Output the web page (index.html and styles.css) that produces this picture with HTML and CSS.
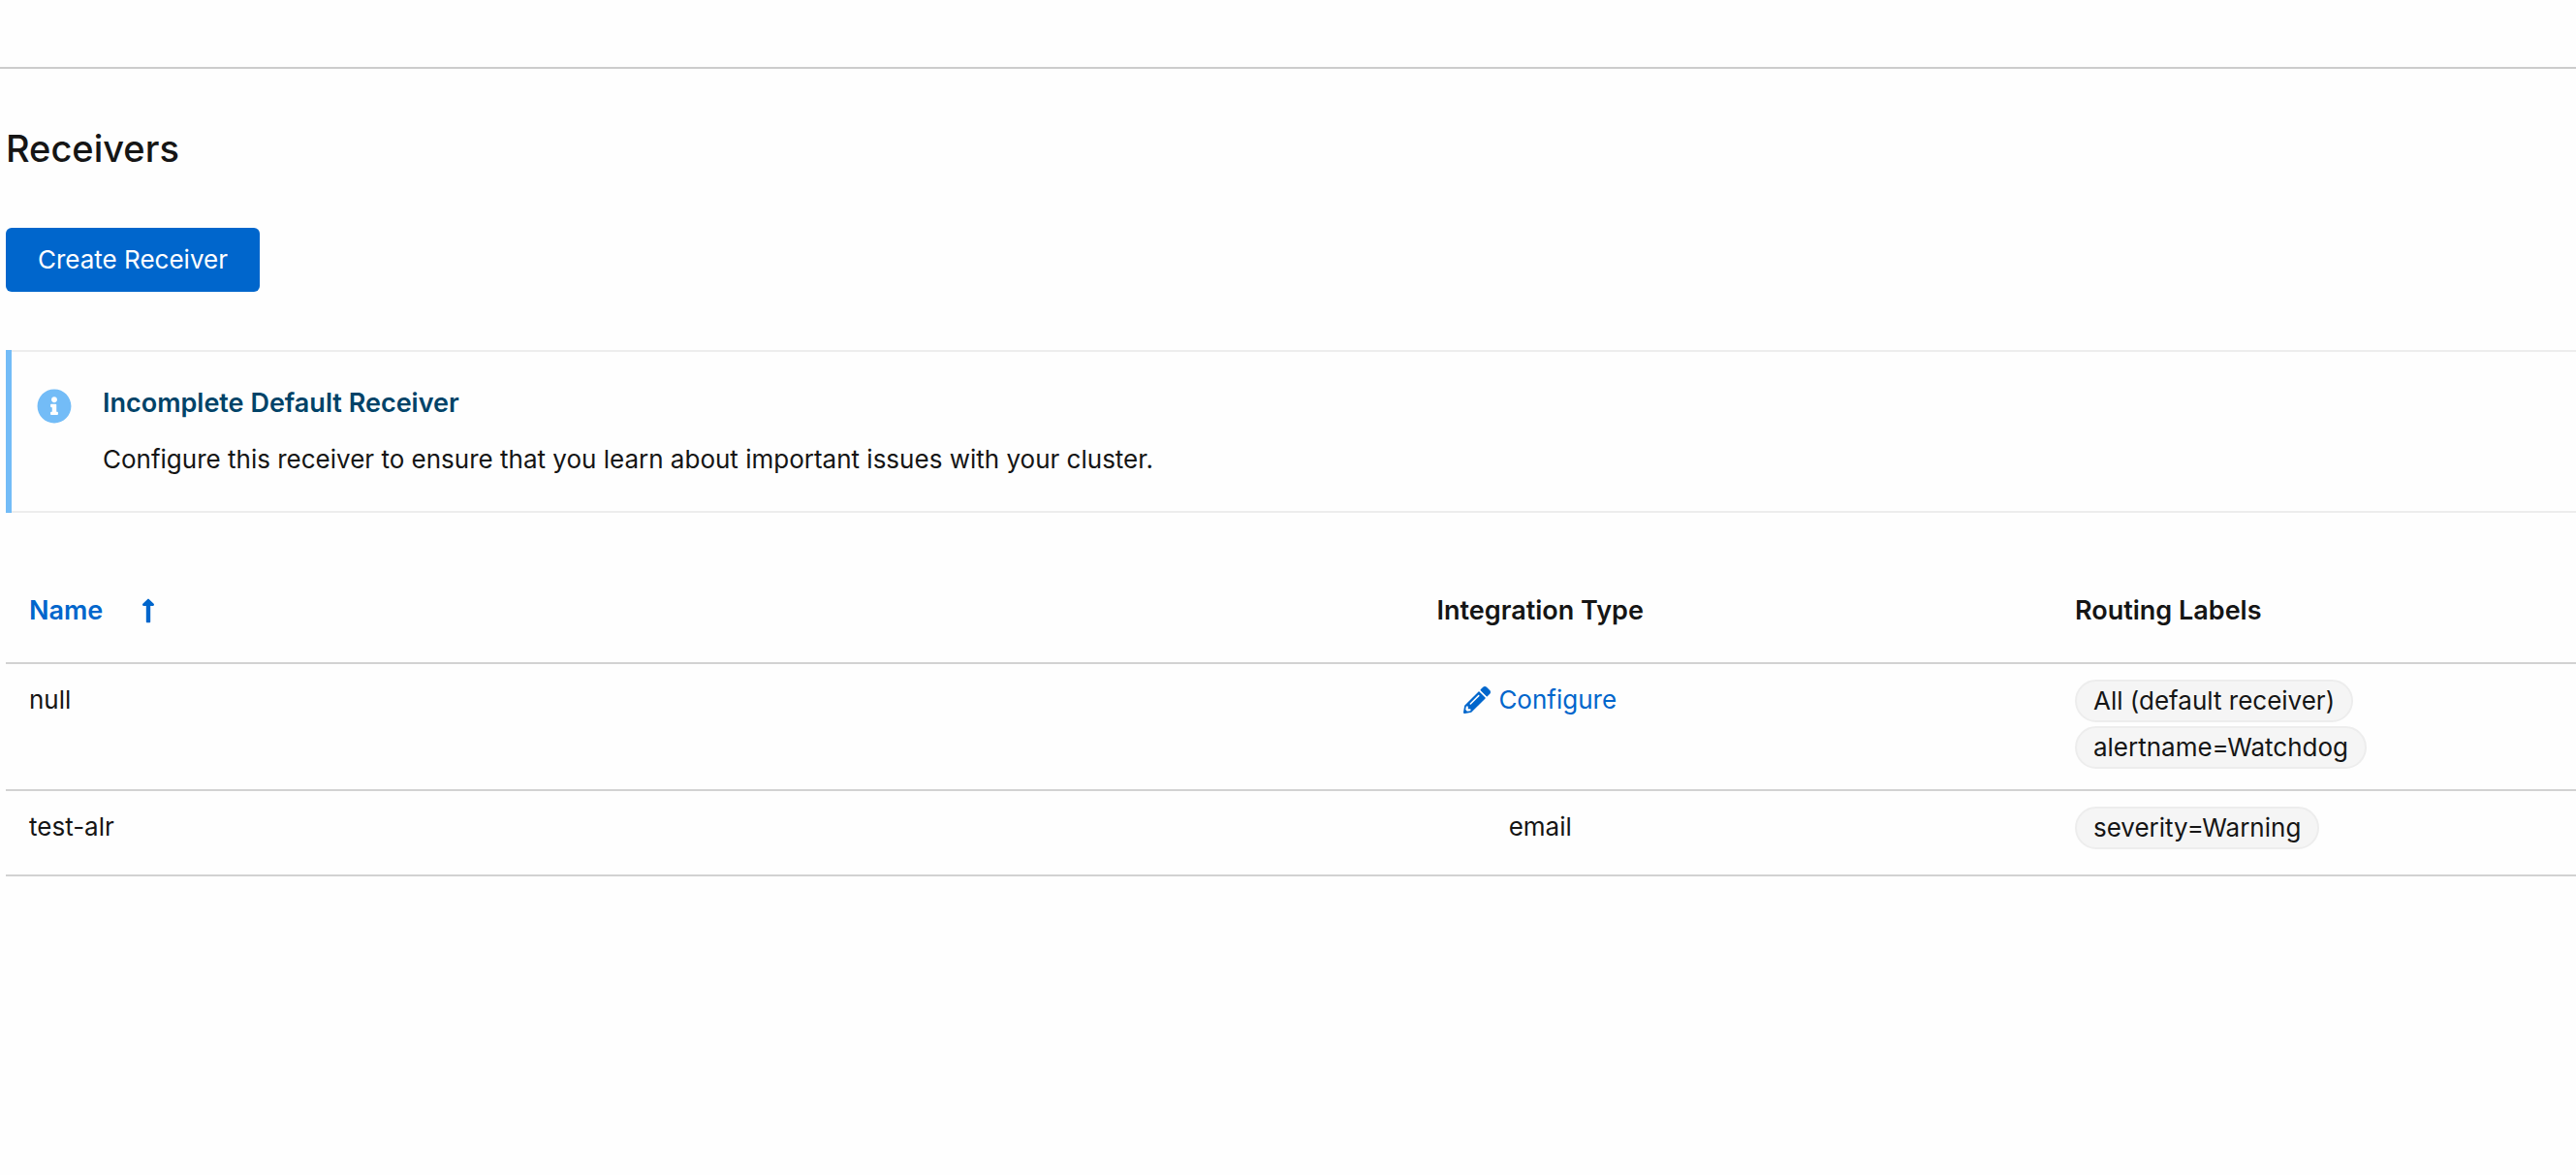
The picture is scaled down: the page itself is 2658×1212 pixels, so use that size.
FILE: index.html
```html
<!DOCTYPE html>
<html lang="en">
<head>
<meta charset="utf-8">
<title>Receivers</title>
<link rel="stylesheet" href="styles.css">
</head>
<body>
<header class="topbar"></header>
<main class="page">
  <h1 class="page-title">Receivers</h1>
  <button class="button" type="button">Create Receiver</button>
  <section class="alert" aria-labelledby="alert-title">
    <div class="alert-body">
      <svg class="alert-icon" viewBox="0 0 512 512" aria-hidden="true"><path d="M256 8C119.043 8 8 119.083 8 256c0 136.997 111.043 248 248 248s248-111.003 248-248C504 119.083 392.957 8 256 8zm0 110c23.196 0 42 18.804 42 42s-18.804 42-42 42-42-18.804-42-42 18.804-42 42-42zm56 254c0 6.627-5.373 12-12 12h-88c-6.627 0-12-5.373-12-12v-24c0-6.627 5.373-12 12-12h12v-64h-12c-6.627 0-12-5.373-12-12v-24c0-6.627 5.373-12 12-12h64c6.627 0 12 5.373 12 12v100h12c6.627 0 12 5.373 12 12v24z"/></svg>
      <div class="alert-content">
        <h2 class="alert-title" id="alert-title">Incomplete Default Receiver</h2>
        <p class="alert-text">Configure this receiver to ensure that you learn about important issues with your cluster.</p>
      </div>
    </div>
  </section>
  <table class="table">
    <thead>
      <tr>
        <th class="col-name" scope="col" aria-sort="ascending">
          <button class="sort" type="button">Name
            <svg class="sort-icon" viewBox="0 0 256 512" aria-hidden="true"><path d="M88 166.059V468c0 6.627 5.373 12 12 12h56c6.627 0 12-5.373 12-12V166.059h46.059c21.382 0 32.09-25.851 16.971-40.971l-86.059-86.059c-9.373-9.373-24.569-9.373-33.941 0l-86.059 86.059c-15.119 15.119-4.411 40.971 16.971 40.971H88z"/></svg>
          </button>
        </th>
        <th class="col-type" scope="col">Integration Type</th>
        <th class="col-labels" scope="col">Routing Labels</th>
      </tr>
    </thead>
    <tbody>
      <tr>
        <td>null</td>
        <td class="col-type"><a class="link" href="#configure"><svg class="link-icon" viewBox="0 0 512 512" aria-hidden="true"><path d="M497.9 142.1l-46.1 46.1c-4.7 4.7-12.3 4.7-17 0l-111-111c-4.7-4.7-4.7-12.3 0-17l46.1-46.1c18.7-18.7 49.1-18.7 67.9 0l60.1 60.1c18.8 18.7 18.8 49.1 0 67.9zM284.2 99.8L21.6 362.4.4 483.9c-2.9 16.4 11.4 30.6 27.8 27.8l121.5-21.3 262.6-262.6c4.7-4.7 4.7-12.3 0-17l-111-111c-4.8-4.7-12.4-4.7-17.1 0zM124.1 339.9c-5.5-5.5-5.5-14.3 0-19.8l154-154c5.5-5.5 14.3-5.5 19.8 0s5.5 14.3 0 19.8l-154 154c-5.5 5.5-14.3 5.5-19.8 0zM88 424h48v36.3l-64.5 11.3-31.1-31.1L51.7 376H88v48z"/></svg>Configure</a></td>
        <td>
          <div class="labels"><span class="label">All (default receiver)</span><span class="label">alertname=Watchdog</span></div>
        </td>
      </tr>
      <tr>
        <td>test-alr</td>
        <td class="col-type">email</td>
        <td>
          <div class="labels"><span class="label">severity=Warning</span></div>
        </td>
      </tr>
    </tbody>
  </table>
</main>
</body>
</html>
```
FILE: styles.css
```css
* {
  box-sizing: border-box;
}

body {
  margin: 0;
  background: #fefefe;
  color: #151515;
  font-family: Inter, "Liberation Sans", sans-serif;
  font-size: 26px;
  line-height: 42px;
}

.topbar {
  height: 71px;
  border-bottom: 2px solid #ccc;
}

.page {
  padding: 52px 0 52px 6px;
}

.page-title {
  margin: 0 0 52px;
  font-size: 38px;
  font-weight: 500;
  line-height: 60px;
}

.button {
  display: block;
  padding: 12px 33px;
  border: 0;
  border-radius: 6px;
  background: #06c;
  color: #fff;
  font: inherit;
}

.alert {
  margin: 60px 0 48px;
  border-left: 6px solid #73bcf7;
}

.alert-body {
  display: flex;
  gap: 32px;
  padding: 32px 0 32px 26px;
  border-top: 2px solid #ededed;
  border-bottom: 2px solid #ededed;
}

.alert-icon {
  flex: none;
  width: 36px;
  height: 36px;
  margin-top: 6px;
  fill: #73bcf7;
}

.alert-title {
  margin: 0 0 16px;
  color: #004368;
  font-size: 27px;
  font-weight: 600;
}

.alert-text {
  margin: 0;
}

.table {
  width: 100%;
  table-layout: fixed;
  border-collapse: separate;
  border-spacing: 0;
}

.table th {
  padding: 32px 24px;
  border-bottom: 2px solid #d2d2d2;
  font-size: 27px;
  font-weight: 600;
  text-align: left;
}

.table td {
  height: 88px;
  padding: 16px 24px 21px;
  border-bottom: 2px solid #d2d2d2;
  vertical-align: top;
}

.col-name,
.col-type {
  width: 39.8%;
}

.table .col-type {
  text-align: center;
}

.sort {
  display: flex;
  align-items: center;
  gap: 40px;
  padding: 0;
  border: 0;
  background: none;
  color: #06c;
  font: inherit;
}

.sort-icon {
  width: 14px;
  height: 28px;
  fill: currentColor;
}

.link {
  display: inline-flex;
  align-items: center;
  gap: 8px;
  color: #06c;
  text-decoration: none;
}

.link-icon {
  width: 28px;
  height: 28px;
  fill: currentColor;
}

.labels {
  display: flex;
  flex-direction: column;
  align-items: flex-start;
  gap: 4px;
}

.label {
  padding: 0 17px;
  border: 2px solid #ededed;
  border-radius: 22px;
  background: #f5f5f5;
  line-height: 40px;
  white-space: nowrap;
}
```
